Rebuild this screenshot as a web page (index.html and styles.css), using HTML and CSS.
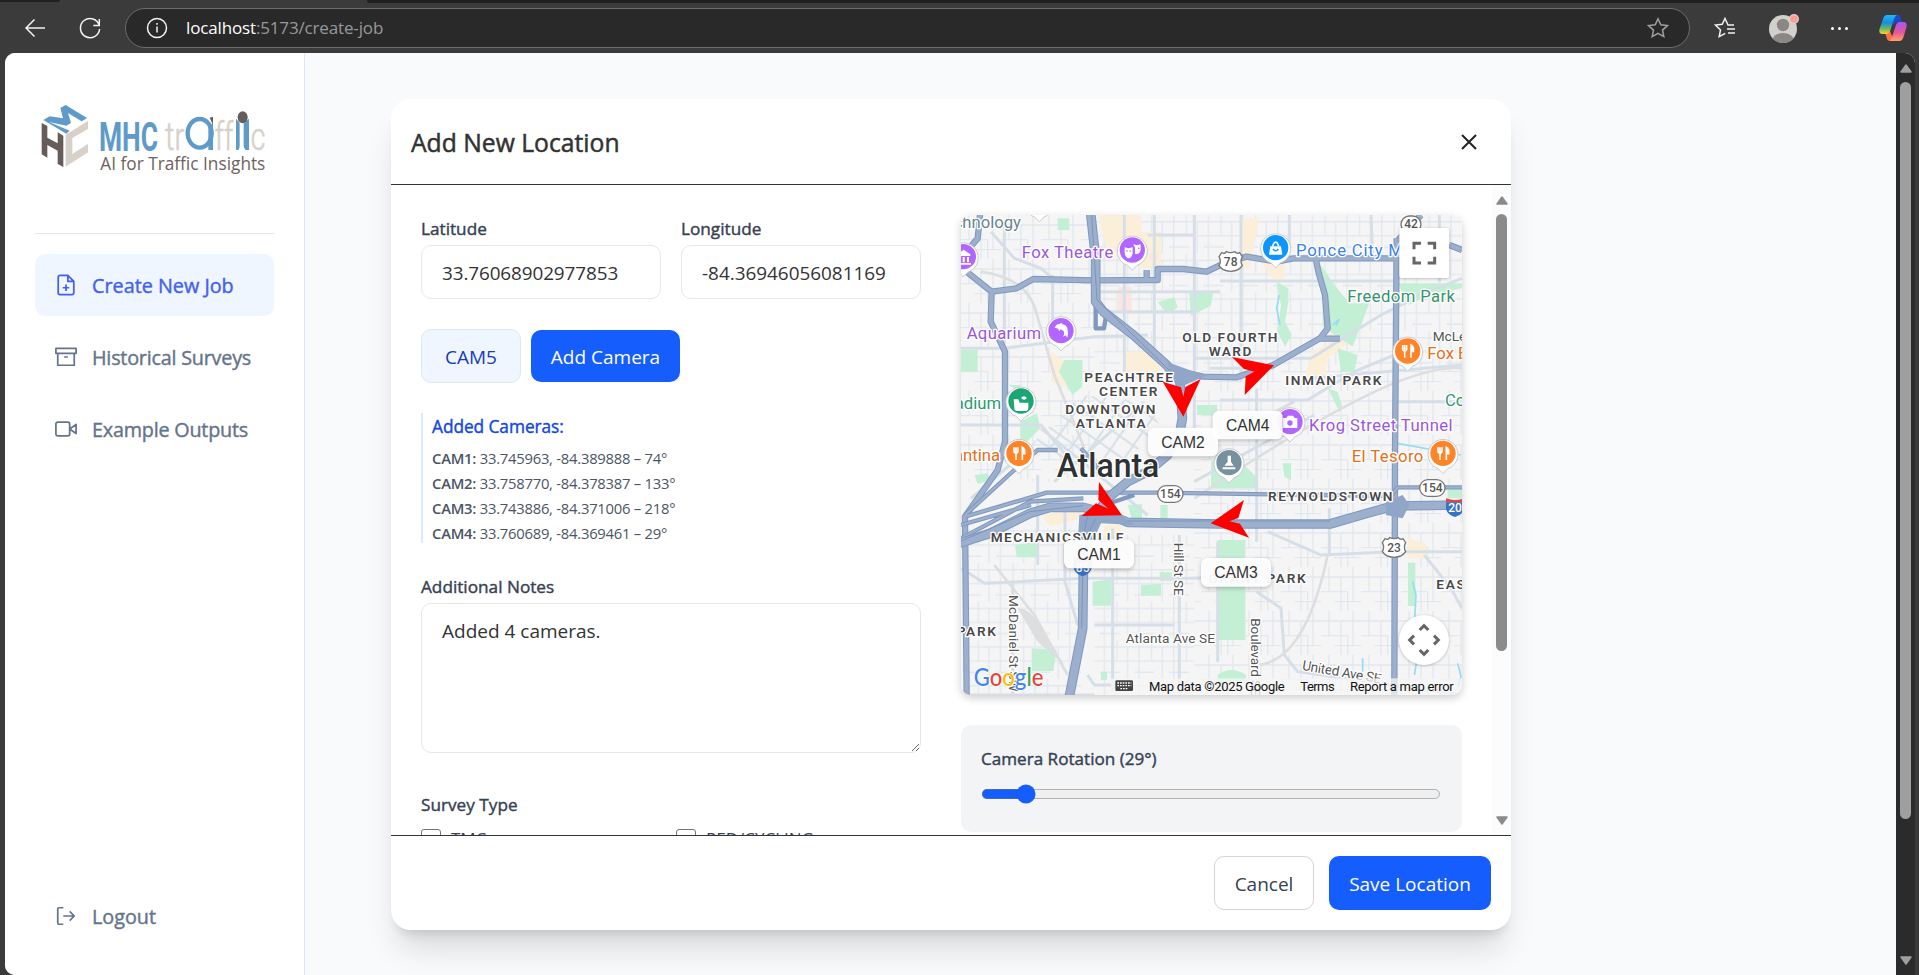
FILE: index.html
```html
<!DOCTYPE html>
<html lang="en">
<head>
<meta charset="utf-8">
<title>Create New Job</title>
<link rel="stylesheet" href="styles.css">
</head>
<body>
<div class="browser">
  <div class="tabstrip"><span class="tab-left"></span><span class="tab-right"></span></div>
  <div class="toolbar">
    <span class="tool back"><svg width="24" height="24" viewBox="0 0 24 24"><path d="M22 12H3M11.500 3.500L3 12l8.500 8.500"/></svg></span>
    <span class="tool reload"><svg width="24" height="24" viewBox="0 0 24 24"><path d="M21.300 9.500A9.600 9.600 0 1 0 21.600 13M21.300 3v6.500h-6"/></svg></span>
    <div class="address">
      <svg width="22" height="22" viewBox="0 0 22 22"><circle cx="11" cy="11" r="9.500"/><path d="M11 9.500v6M11 6v1.700"/></svg>
      <span class="url"><b>localhost</b>:5173/create-job</span>
      <svg class="star" width="22" height="22" viewBox="0 0 22 22"><path d="M11 1.800l2.800 6 6.600.8-4.900 4.500 1.300 6.500-5.800-3.200-5.800 3.200 1.300-6.500L1.600 8.600l6.600-.8z"/></svg>
    </div>
    <span class="tool favs"><svg width="24" height="24" viewBox="0 0 24 24"><path d="M21 9h-6l-3-6.500-2.800 5.800-6.700.8 5 4.800-1.300 6.700 6-3.300M14 13h8M15 17h7"/></svg></span>
    <span class="tool avatar"><svg width="32" height="32" viewBox="0 0 32 32"><defs><clipPath id="av"><circle cx="15" cy="17" r="14"/></clipPath></defs><circle cx="15" cy="17" r="14" fill="#d2d0cc"/><g clip-path="url(#av)" fill="#8b8884"><circle cx="15" cy="13" r="6.200"/><ellipse cx="15" cy="29" rx="11" ry="8"/></g><circle cx="26" cy="7" r="5" fill="#d9d2cd"/><circle cx="26" cy="7" r="3.800" fill="#ff9d93"/></svg></span>
    <span class="tool dots"><i></i><i></i><i></i></span>
    <span class="tool copilot"><svg width="28" height="28" viewBox="0 0 28 28"><defs><linearGradient id="ca" x1="0" y1="0" x2="0" y2="1"><stop offset="0" stop-color="#20b7f5"/><stop offset=".4" stop-color="#158ee0"/><stop offset=".7" stop-color="#62b66a"/><stop offset="1" stop-color="#ffd02f"/></linearGradient><linearGradient id="cb" x1="0" y1="0" x2="0" y2="1"><stop offset="0" stop-color="#a455ef"/><stop offset=".55" stop-color="#e85599"/><stop offset="1" stop-color="#ffa463"/></linearGradient></defs><path d="M15 1h4q2 0 2.600 2.200L23 8h-5l-5 3z" fill="#1948c8"/><path d="M6.500 20L11 17l4 10h-4q-2.500 0-3-2z" fill="#ff6f3c"/><path d="M8 1h10q-2 1-3 4l-4 12q-1 3-4 3H3.500Q-.5 20 .5 15L4 5q1.200-4 4-4z" fill="url(#ca)"/><path d="M20 8h4.500q4 0 3 5l-3 10q-1.200 4-4 4H10q2-1 3-4l4-12q1-3 3-3z" fill="url(#cb)"/></svg></span>
  </div>

  <div class="viewport">
    <aside class="sidebar">
      <svg class="logo" viewBox="100 300 720 240" role="img" aria-label="MHC traffic">
        <path fill="#5e9aca" d="M182 324L198 315 262 354 246 364 205 339 214 369 200 377 148 366 210 392 200 401 131 360 150 349 190 355z"/>
        <path fill="#665d5b" d="M126 369L143 378V413L174 430V397L191 407V501L174 492V452L143 435V473L126 463z"/>
        <path fill="#d7d1ca" d="M265 363V387L218 414V462L265 431V457L198 500V404z"/>
        <text x="298" y="452" class="lg-mhc" textLength="177" lengthAdjust="spacingAndGlyphs">MHC</text>
        <text x="496" y="450" class="lg-thin" textLength="58" lengthAdjust="spacingAndGlyphs">tr</text>
        <ellipse cx="600" cy="400" rx="36" ry="43" fill="none" stroke="#5e9aca" stroke-width="13"/>
        <path d="M626 372h14v78h-14z" fill="#5e9aca"/><path d="M630 353l10-3v25z" fill="#665d5b"/>
        <text x="645" y="450" class="lg-thin" textLength="56" lengthAdjust="spacingAndGlyphs">ff</text>
        <path d="M709 356l11 12v70q0 6-4 12h-7zM748 356l-16 14v68q2 8 5 12h11z" fill="#5e9aca"/><ellipse cx="729" cy="352" rx="15" ry="18" fill="#665d5b"/>
        <text x="753" y="450" class="lg-thin" textLength="44" lengthAdjust="spacingAndGlyphs">c</text>
        <text x="302" y="509" class="lg-tag" textLength="495" lengthAdjust="spacingAndGlyphs">AI for Traffic Insights</text>
      </svg>
      <nav class="nav">
        <a class="nav-item active"><svg viewBox="0 0 24 24"><path d="M14 1.500H5.500a2 2 0 0 0-2 2v17a2 2 0 0 0 2 2h13a2 2 0 0 0 2-2V8zM14 1.500v6.500h6.500M12 11.500v7M8.500 15h7"/></svg><span>Create New Job</span></a>
        <a class="nav-item"><svg viewBox="0 0 24 24"><path d="M1 2.500h22v5.500h-22zM3 8v13h18V8M10 12h4"/></svg><span class="tight">Historical Surveys</span></a>
        <a class="nav-item"><svg viewBox="0 0 24 24"><path d="M23 7l-7 5 7 5zM3 4.500h11a2 2 0 0 1 2 2v11a2 2 0 0 1-2 2H3a2 2 0 0 1-2-2V6.500a2 2 0 0 1 2-2z"/></svg><span class="tight">Example Outputs</span></a>
      </nav>
      <a class="nav-item logout"><svg viewBox="0 0 24 24"><path d="M9 3H4.500A1.500 1.500 0 0 0 3 4.500v15A1.500 1.500 0 0 0 4.500 21H9M16 7l5 5-5 5M21 12H9"/></svg><span>Logout</span></a>
    </aside>

    <main class="content">
      <section class="modal">
        <header class="modal-head"><h2>Add New Location</h2><svg width="16" height="16" viewBox="0 0 16 16"><path d="M1 1l14 14M15 1L1 15"/></svg></header>
        <div class="modal-body">
          <div class="form">
            <div class="coords">
              <label>Latitude<span class="input">33.76068902977853</span></label>
              <label>Longitude<span class="input">-84.36946056081169</span></label>
            </div>
            <div class="cam-row"><span class="cam-name">CAM5</span><button class="btn primary add">Add Camera</button></div>
            <div class="added">
              <h3>Added Cameras:</h3>
              <p><b>CAM1:</b> 33.745963, -84.389888 – 74°</p>
              <p><b>CAM2:</b> 33.758770, -84.378387 – 133°</p>
              <p><b>CAM3:</b> 33.743886, -84.371006 – 218°</p>
              <p><b>CAM4:</b> 33.760689, -84.369461 – 29°</p>
            </div>
            <label class="notes">Additional Notes</label>
            <textarea>Added 4 cameras.</textarea>
            <div class="survey">Survey Type</div>
            <div class="checks"><span><i></i>TMC</span><span><i></i>PED/CYCLING</span></div>
          </div>

          <div class="side">
            <div class="map">
<svg viewBox="0 0 1503 1440" width="501" height="480">
<defs>
<pattern id="g1" width="120" height="132" patternUnits="userSpaceOnUse"><path class="minor" d="M0 30H120M0 74H80M40 104H120M24 0V74M60 30V132M96 0V104M80 74V132"/></pattern>
<pattern id="g2" width="104" height="116" patternUnits="userSpaceOnUse"><path class="minor" d="M0 20H104M0 62H104M0 96H60M14 0V116M52 0V62M84 20V116"/></pattern>
<pattern id="g3" width="50" height="50" patternUnits="userSpaceOnUse" patternTransform="rotate(35)"><path class="minor mid" d="M0 20H50M20 0V50"/></pattern>
<g id="pin"><path d="M0 61L-14 46A45 45 0 1 1 14 46Z" fill="#fff" stroke="#c9ccd0" stroke-width="3"/><circle r="38"/></g>
<g id="fork" fill="none" stroke="#fff" stroke-width="5"><path d="M-15-18v11q0 6 6 6t6-6v-11M-9-18V20"/><path d="M10 20V-18q9 4 7 19h-7" fill="#fff"/></g>
</defs>
<rect width="1503" height="1440" fill="#f5f5f5"/>
<path fill="url(#g1)" d="M0 0H400V800H0zM700 430H1503V1440H700z"/>
<path fill="url(#g2)" d="M400 0H820V470H400zM10 940H360V1440H10zM400 960H700V1440H400zM820 0H1503V450H820z"/>
<path fill="#fbefd9" d="M410 0h130v80l-40 50-60-20zM540 50h60v110h-60zM835 10h60l-30 150h-30zM900 140h70v50l-30 10zM490 410h110v80h-110zM270 410l70 50-20 60-50-20zM1050 410l50-20 10-50 60-50 10 80-80 60-10 60-60 10zM930 590l60-30v60l-50 30zM240 900l120-20v30l-90 25zM430 930h50v110h-50zM1340 970l55 15v45h-55z"/>
<path fill="#fce4e2" d="M470 215h42v80h-42zM565 115h26v20h-26z"/>
<path fill="#c3f0d4" d="M290 10h35v35h-35zM685 232h72l-8 40-60 32zM590 262l50-15 10 30-30 20zM0 405h50v65H0zM310 435h54v80l-30 24-40-70zM142 510h36v190l60-60-10-45-50 25v-90zM708 570h60v30h-60zM947 200l35 20v40l-10 60 20 40-20 35-22-45 10-80zM1075 145l50 70 40 50 60 0-50 130-90-60v-80zM1310 205h193v15l-100 20-60 30zM1130 400l60 20-10 50-40 0zM1100 520l30 10 15 50-10 10-20-40zM395 1100l55-8v80h-55zM500 870l43-2v48l-30 0zM598 870h22v46h-22zM750 740l60-30 80 80v30H750zM770 975h83v300H770zM162 990l65-10v47h-60zM540 1110l60-4v36h-60zM596 1072h36v26h-36zM212 1300l75 4-10 64h-65zM770 1380q40-30 85 0v20h-85zM1341 1043h22v130h-22zM1460 820h43v30h-43zM965 745h25v50l-20-10zM40 780l40-5 10 20-40 12zM420 1370h18v25h-18z"/>
<path fill="url(#g3)" d="M360 540L560 560 600 640 440 790 210 690z"/>
<path class="mid" d="M0 400H130L400 365 560 360M275 180V360M130 410V20M490 0V470M580 0V400M700 0V640M400 230H777M400 290H700M560 60H700M0 630H240L340 750M240 640L560 900M540 570L280 800M840 0V500M777 198H1300M700 430H1050L1260 300 1400 230 1503 190M1050 490L1503 450M777 555H1040L1180 470 1300 420M887 520V980M747 460H940M90 50L160 130 240 160 275 190M1230 0L1235 130M985 0V100M1435 0V200M1105 880V1020M920 950L1080 1020 1300 1010H1503M1390 1020L1470 1120 1503 1180M887 1130L960 1180 970 1320 1010 1370 1503 1440M0 1060L70 1105 367 1090H770M455 940V1430M655 960V1440M155 1100V1440M230 780V1050M312 870V1100L350 1230M770 980V1340M0 1440H400M380 1380L400 1410H500M400 1230H640M1503 560L1300 560M850 640L1000 560M700 800L1060 600M30 850L170 730"/>
<path d="M60 170Q200 190 225 290L280 480 370 700M100 1050L220 1200 320 1380M700 850Q1000 650 1200 550T1503 460M1100 1020Q1030 1350 880 1350" fill="none" stroke="#dcdee0" stroke-width="8"/>
<path d="M170 1180Q210 1180 240 1240L310 1350 230 1280z" fill="#dcdee0"/>
<path d="M955 240l-8 40 10 50M1115 330l20-18-10 20M1355 1100l10 40-5 90M1360 1240l10 80-10 60M1205 1330v40M1490 1345l10 40-10 30M1310 685l190 35" fill="none" stroke="#93ddf2" stroke-width="5"/>
<g class="hwy-case"><path id="roads" d="M57 0L50 70 20 105M17 170L92 230 167 220 217 192 397 196 590 195 590 162 667 162 737 170 800 140 857 125 947 140 997 130H1307M557 195V165M92 230L89 320 132 410V680L110 765 12 905 17 1440M657 470L727 485 827 487 937 450 1077 370 1100 340 1092 240 1072 170 1065 135M1077 370L1137 371M1307 70L1302 720 1300 1440M1380 0L1307 80M1465 90L1503 105"/></g>
<g class="hwy"><use href="#roads"/></g>
<path class="thin-case" d="M12 905L257 833H587L1290 843 1310 817H1503M0 970L207 860 367 850M12 900L160 765 230 705 290 705M0 930L210 870M400 900L430 870 520 840M360 700L420 770M404 260v80h25l8-50"/>
<path class="thin" d="M12 905L257 833H587L1290 843 1310 817H1503M0 970L207 860 367 850M12 900L160 765 230 705 290 705M0 930L210 870M360 700L420 770"/>
<path class="big-case" d="M389 -5L404 130V260L427 290 517 360 617 450 657 500 664 610 657 650 620 720 560 770 500 800 440 850 390 920 367 960V1075L365 1240 325 1445M-5 985L87 955 207 895 267 877H367L437 895 500 922 777 927H1107L1217 895 1297 873 1508 870"/>
<path class="big" d="M389 -5L404 130V260L427 290 517 360 617 450 657 500 664 610 657 650 620 720 560 770 500 800 440 850 390 920 367 960V1075L365 1240 325 1445M-5 985L87 955 207 895 267 877H367L437 895 500 922 777 927H1107L1217 895 1297 873 1508 870"/>
<path d="M617 440L700 470 740 480 650 520zM355 900L450 880 520 930 420 925 390 990H350zM1275 860l50-20 20 30-20 40-50-10z" fill="#8fa6c8"/>
<path d="M392 0L408 255 640 480M365 1080L362 1240M0 978L207 890 367 872M370 950l10-50M385 950l20-40M500 918H1107" fill="none" stroke="#7b95bd" stroke-width="3"/>

<g class="area">
<text x="370" y="500" textLength="266">PEACHTREE</text><text x="414" y="542" textLength="175">CENTER</text>
<text x="313" y="598" textLength="270">DOWNTOWN</text><text x="344" y="639" textLength="210">ATLANTA</text>
<text x="664" y="382" textLength="285">OLD FOURTH</text><text x="743" y="424" textLength="128">WARD</text>
<text x="973" y="511" textLength="288">INMAN PARK</text><text x="89" y="980" textLength="398">MECHANICSVILLE</text>
<text x="921" y="858" textLength="373">REYNOLDSTOWN</text><text x="742" y="1105" textLength="292">GRANT PARK</text>
<text x="1426" y="1121" textLength="116">EAST</text><text x="-13" y="1262" textLength="118">PARK</text>
</g>
<g class="poi">
<text x="180" y="40" text-anchor="end" fill="#6a8390">chnology</text>
<text x="182" y="130" textLength="275" fill="#9a55e0">Fox Theatre</text><text x="17" y="373" textLength="223" fill="#9a55e0">Aquarium</text>
<text x="120" y="582" text-anchor="end" fill="#2c9a70">Stadium</text><text x="117" y="738" text-anchor="end" fill="#e07020">Cantina</text>
<text x="1005" y="123" fill="#3f80ea" textLength="445">Ponce City Market</text><text x="1159" y="260" textLength="323" fill="#35946d">Freedom Park</text>
<text x="1415" y="378" fill="#444" class="sm">McLendon</text><text x="1399" y="433" fill="#e07020">Fox Bros</text>
<text x="1452" y="574" fill="#2c9a70">Co</text><text x="1044" y="647" textLength="431" fill="#9a55e0">Krog Street Tunnel</text>
<text x="1172" y="740" textLength="215" fill="#e07020">El Tesoro</text>
<text class="sm" x="494" y="1285" textLength="268">Atlanta Ave SE</text>
<text class="sm" transform="translate(143 1140) rotate(90)" textLength="290">McDaniel St SW</text>
<text class="sm" transform="translate(640 983) rotate(90)" textLength="159">Hill St SE</text>
<text class="sm" transform="translate(870 1210) rotate(90)" textLength="232">Boulevard SE</text>
<text class="sm" transform="translate(1022 1364) rotate(10)" textLength="240">United Ave SE</text>
</g>
<text class="city" x="287" y="785" textLength="308" lengthAdjust="spacingAndGlyphs">Atlanta</text>

<g class="shield"><path d="M782 113q10 5 14-3 13 6 26 0 6 8 14 3l8 12q-8 15 0 26-8 16-35 18-27-2-35-18 8-11 0-26z"/><path d="M1272 971q10 5 14-3 13 6 26 0 6 8 14 3l8 12q-8 15 0 26-8 16-35 18-27-2-35-18 8-11 0-26z"/><rect x="1320" y="3" width="60" height="50" rx="25"/><rect x="590" y="812" width="76" height="50" rx="25"/><rect x="1376" y="794" width="76" height="50" rx="25"/></g>
<g class="num"><text x="809" y="152">78</text><text x="1299" y="1010">23</text><text x="1350" y="40">42</text><text x="628" y="849">154</text><text x="1414" y="831">154</text></g>
<path d="M1455 862h54v20q-5 18-27 24-22-6-27-24zM338 1040h54v20q-5 18-27 24-22-6-27-24z" fill="#3872c4"/><path d="M1455 850q27 10 54 0v12h-54zM338 1028h54v12h-54z" fill="#d8474c"/>
<g class="num wh"><text x="1482" y="892">20</text><text x="365" y="1070">85</text></g>

<use href="#pin" x="235" y="-40" fill="#9aa6ad"/>
<use href="#pin" x="514" y="105" fill="#b266ff"/><use href="#pin" x="7" y="125" fill="#b266ff"/><use href="#pin" x="300" y="347" fill="#b266ff"/><use href="#pin" x="987" y="620" fill="#b266ff"/>
<use href="#pin" x="180" y="558" fill="#1ba673"/><use href="#pin" x="944" y="98" fill="#0a95ff"/><use href="#pin" x="804" y="743" fill="#78919f"/>
<use href="#pin" x="174" y="715" fill="#ff8327"/><use href="#pin" x="1340" y="408" fill="#ff8327"/><use href="#pin" x="1446" y="715" fill="#ff8327"/>
<use href="#fork" x="174" y="715"/><use href="#fork" x="1340" y="408"/><use href="#fork" x="1446" y="715"/>
<g fill="#fff"><path d="M491 97q12 5 24 0v18q-3 14-12 15-9-1-12-15zM517 88q11 5 22 0v17q-3 13-14 12l-3-1V98z"/><path d="M-10 118L8 104l20 14v5h-38zM-8 126h6v16h-6zM5 126h6v16H5zM18 126h6v16h-6zM-12 144h42v5h-42z"/><path d="M281 338q4-10 14-11l8-4 1 5q12 2 15 12 4 12 0 28l-5-7-8 4q6-9 2-17l-9-5-5 6-2-8z"/><path d="M158 553h14l4 10h26v16q0 9-9 9h-25q-8 0-8-9zM180 549q9-10 18 0-9 10-18 0z"/><path d="M928 94h32l4 25h-40z"/><path d="M966 609h10l5-7h15l5 7h8v30h-43z"/><path d="M800 722h10v18l8 12h-28l10-12zM785 757h38v6h-38z"/></g>
<path d="M936 94v-4q8-18 16 0v4" fill="none" stroke="#fff" stroke-width="5"/><path d="M936 102q8 11 16 0" fill="none" stroke="#0a95ff" stroke-width="4"/><circle cx="987" cy="624" r="8" fill="#b266ff"/><g fill="#b266ff"><circle cx="498" cy="108" r="2.500"/><circle cx="508" cy="108" r="2.500"/><circle cx="533" cy="100" r="2.500"/></g>

<path fill="#f00" d="M605 500L667 605 719 492 673 516 667 545 660 517zM813 426L939 451 851 540 854 484 880 470 848 461zM414 801L483 901 362 903 405 865 442 881 412 855zM849 855L749 925 864 968 837 926 805 919 832 909z"/>
<g class="tag"><rect x="561" y="638" width="210" height="86" rx="20"/><rect x="755" y="587" width="210" height="86" rx="20"/><rect x="309" y="974" width="210" height="86" rx="20"/><rect x="720" y="1029" width="210" height="86" rx="20"/></g>
<g class="tagtext"><text x="666" y="698">CAM2</text><text x="860" y="647">CAM4</text><text x="414" y="1034">CAM1</text><text x="825" y="1089">CAM3</text></g>

<g class="ctl"><rect x="1315" y="39" width="149" height="150" rx="6"/><circle cx="1389" cy="1275" r="75"/></g>
<g fill="none" stroke="#666" stroke-width="9"><path d="M1359 103V85h21M1400 85h21v18M1421 125v19h-21M1380 144h-21v-19"/><path d="M1376 1245l13-13 13 13M1376 1305l13 13 13-13M1359 1262l-13 13 13 13M1419 1262l13 13-13 13"/></g>
<rect x="450" y="1390" width="1053" height="50" fill="#f5f5f5" opacity=".75"/>
<text class="google" x="38" y="1413" textLength="209" lengthAdjust="spacingAndGlyphs"><tspan fill="#4285f4">G</tspan><tspan fill="#ea4335">o</tspan><tspan fill="#fbbc04">o</tspan><tspan fill="#4285f4">g</tspan><tspan fill="#34a853">l</tspan><tspan fill="#ea4335">e</tspan></text>
<rect x="463" y="1396" width="53" height="32" rx="4" fill="#444"/><path d="M469 1404h42M469 1412h42M478 1421h24" stroke="#fff" stroke-width="4" stroke-dasharray="5 3"/>
<g class="credit"><text x="564" y="1427" textLength="407">Map data ©2025 Google</text><text x="1018" y="1427" textLength="103">Terms</text><text x="1167" y="1427" textLength="311">Report a map error</text></g>
</svg>
            </div>
            <div class="rotation"><div>Camera Rotation (29°)</div><input type="range" min="0" max="360" value="29"></div>
          </div>
          <div class="scroll inner"><svg width="12" height="9" viewBox="0 0 12 9"><path d="M6 1l5 7H1z"/></svg><i></i><svg width="12" height="9" viewBox="0 0 12 9"><path d="M6 8l5-7H1z"/></svg></div>
        </div>
        <footer class="modal-foot"><button class="btn cancel">Cancel</button><button class="btn primary save">Save Location</button></footer>
      </section>
    </main>
    <div class="scroll outer"><svg width="12" height="9" viewBox="0 0 12 9"><path d="M6 1l5 7H1z"/></svg><i></i><svg width="12" height="9" viewBox="0 0 12 9"><path d="M6 8l5-7H1z"/></svg></div>
  </div>
</div>
</body>
</html>
```
FILE: styles.css
```css
* { box-sizing: border-box; }
body { margin: 0; overflow: hidden; font-family: "Open Sans", "Noto Sans", sans-serif; font-size: 19px; color: #333; }
h2, h3, p { margin: 0; }
.browser { height: 975px; display: flex; flex-direction: column; background: #3b3b3b; }
.tabstrip { height: 3px; display: flex; justify-content: space-between; }
.tab-left { width: 60px; height: 2px; background: #202020; border-radius: 0 0 4px 0; }
.tab-right { width: 1552px; height: 3px; background: #202020; border-radius: 0 0 0 4px; }
.toolbar { height: 50px; display: flex; align-items: center; flex: none; }
.toolbar svg { fill: none; stroke: #f2f2f2; stroke-width: 1.500; display: block; }
.toolbar .avatar svg, .toolbar .copilot svg { stroke: none; }
.back { margin-left: 23px; }
.reload { margin-left: 31px; }
.address { width: 1565px; height: 40px; margin-left: 23px; padding: 0 20px; border: 1px solid #6c6c6c; border-radius: 20px; background: #292929; display: flex; align-items: center; }
.url { margin-left: 18px; margin-top: -2px; font-size: 17px; color: #999; letter-spacing: -.15px; }
.url b { color: #fff; font-weight: 400; }
.address .star { margin-left: auto; stroke: #a0a0a0; }
.favs { margin-left: 23px; }
.avatar { margin-left: 31px; }
.dots { margin-left: 31px; display: flex; gap: 4px; }
.dots i { width: 3px; height: 3px; border-radius: 2px; background: #fff; }
.copilot { margin-left: 31px; }
.viewport { flex: 1; margin-left: 5px; margin-right: 4px; display: flex; border-radius: 10px 10px 0 10px; overflow: hidden; background: #f8fafc; }
.sidebar { width: 300px; border-right: 1px solid #dbe6f5; background: #fff; padding: 47px 30px 28px 30px; display: flex; flex-direction: column; }
.logo { width: 240px; height: 80px; display: block; margin-left: -2px; }
.lg-mhc { font: 700 124px "Roboto", sans-serif; fill: #5e9aca; }
.lg-thin { font: 300 118px "Roboto", sans-serif; fill: #d7d1ca; stroke: #d7d1ca; stroke-width: 2; }
.lg-tag { font: 400 57px "Open Sans", sans-serif; fill: #6d6260; }
.nav { margin-top: 53px; border-top: 1px solid #e2e6ee; padding-top: 20px; display: flex; flex-direction: column; gap: 10px; }
.nav-item { height: 62px; border-radius: 10px; padding: 0 20px; display: flex; align-items: center; gap: 15px; color: #64748b; font-size: 19.800px; white-space: nowrap; -webkit-text-stroke: .4px currentColor; }
.nav-item .tight { letter-spacing: -.22px; }
.nav-item svg { width: 22px; height: 22px; flex: none; fill: none; stroke: currentColor; stroke-width: 1.900; stroke-linejoin: round; }
.nav-item.active { background: #eff6ff; color: #4361ee; }
.logout { margin-top: auto; }
.content { flex: 1; padding: 46px 0 0 86px; }
.modal { width: 1120px; height: 831px; border-radius: 20px; background: #fff; box-shadow: 0 25px 31px -6px rgba(0,0,0,.12), 0 10px 12px -7px rgba(0,0,0,.14); display: flex; flex-direction: column; }
.modal-head { height: 86px; border-bottom: 1px solid #333; padding: 0 34px 0 20px; display: flex; align-items: center; justify-content: space-between; }
.modal-head h2 { font-size: 24.700px; font-weight: 400; padding-top: 2px; -webkit-text-stroke: .5px currentColor; }
.modal-head svg { stroke: #222; stroke-width: 2; }
.modal-body { height: 650px; display: flex; overflow: hidden; padding-left: 30px; }
.form { width: 500px; padding-top: 30px; margin-right: 40px; }
.coords { display: flex; gap: 20px; font-size: 17.200px; color: #364153; -webkit-text-stroke: .4px currentColor; }
.coords label { width: 240px; line-height: 28px; display: flex; flex-direction: column; gap: 2px; }
.input { height: 54px; border: 1px solid #e5e7eb; border-radius: 10px; padding: 0 20px; line-height: 55px; font-size: 18.900px; letter-spacing: -.1px; color: #333; -webkit-text-stroke: 0; }
.coords label:last-child .input { letter-spacing: 0; }
.cam-row { display: flex; align-items: center; gap: 10px; margin-top: 30px; height: 54px; }
.cam-name { width: 100px; height: 54px; line-height: 55px; text-align: center; border: 1px solid #e0e7f0; border-radius: 10px; background: #eff6ff; color: #193cb8; }
.btn { font: 400 19px "Open Sans", "Noto Sans", sans-serif; border: 0; border-radius: 10px; padding: 1px 0 0; }
.primary { background: #155dfc; color: #fff; }
.add { width: 149px; height: 52px; }
.added { height: 130px; margin-top: 30px; border-left: 2px solid #dbeafe; padding-left: 9px; font-size: 14.800px; color: #4a5565; line-height: 25px; letter-spacing: -.24px; }
.added h3 { font-size: 17.300px; line-height: 28px; font-weight: 400; color: #1447e6; margin-bottom: 5px; letter-spacing: -.05px; -webkit-text-stroke: .4px currentColor; }
.added b { font-weight: 600; }
.notes, .survey { display: block; height: 26px; line-height: 26px; margin-top: 31px; font-size: 17.200px; color: #364153; -webkit-text-stroke: .4px currentColor; }
textarea { zoom: 1.25; display: block; width: 400px; height: 120px; margin: 2.400px 0 0; border: 1px solid #e5e7eb; border-radius: 8px; padding: 11px 15px 5px 16px; font: 400 15.200px/22px "Open Sans", "Noto Sans", sans-serif; color: #333; outline: 0; }
.survey { margin-top: 39px; }
.checks { display: flex; margin-top: 11px; font-size: 17px; color: #364153; }
.checks span { width: 255px; flex: none; display: flex; gap: 10px; align-items: flex-start; line-height: 19px; }
.checks i { width: 20px; height: 20px; border: 1px solid #767676; border-radius: 3px; }
.side { width: 501px; padding-top: 30px; }
.map { height: 480px; border-radius: 10px; overflow: hidden; box-shadow: 0 3px 8px rgba(0,0,0,.2); }
.map svg { display: block; }
.map text { font-family: "Roboto", sans-serif; }
.minor, .mid { fill: none; stroke: #e2e8ee; stroke-width: 4; }
.mid { stroke: #d6dfe7; stroke-width: 9; }
.minor.mid { stroke-width: 6; }
.hwy, .hwy-case, .thin, .thin-case, .big, .big-case { fill: none; stroke-linejoin: round; }
.hwy-case { stroke: #7f98be; stroke-width: 19; }
.hwy { stroke: #9cafcd; stroke-width: 13; }
.thin-case { stroke: #7f98be; stroke-width: 13; }
.thin { stroke: #9cafcd; stroke-width: 7; }
.big-case { stroke: #7f98be; stroke-width: 29; }
.big { stroke: #9cafcd; stroke-width: 23; }
.area text, .poi text, .city { paint-order: stroke; stroke: #fff; stroke-width: 8; stroke-linejoin: round; }
.area text { font-size: 41px; font-weight: 600; fill: #48484a; }
.poi text { font-size: 50px; font-weight: 400; }
.poi .sm { font-size: 41px; fill: #555; }
.city { font-size: 100px; font-weight: 500; fill: #303133; }
.shield { fill: #fff; stroke: #777; stroke-width: 4; }
.num text { font-size: 36px; font-weight: 500; fill: #555; text-anchor: middle; }
.num.wh text { fill: #fff; }
.tag { fill: #fff; fill-opacity: .94; filter: drop-shadow(0 5px 6px rgba(0,0,0,.25)); }
.map .tagtext text { font: 47px "Liberation Sans", Arial, sans-serif; fill: #333; text-anchor: middle; }
.ctl { fill: #fff; filter: drop-shadow(0 2px 5px rgba(0,0,0,.25)); }
.map .google { font: 500 76px "Lato", sans-serif; paint-order: stroke; stroke: #fff; stroke-width: 5; }
.credit text { font-size: 39px; fill: #111; }
.rotation { height: 107px; margin-top: 30px; border-radius: 10px; background: #f3f4f6; padding: 21px 20px 0; font-size: 17.100px; line-height: 26px; color: #364153; -webkit-text-stroke: .4px currentColor; }
.rotation input { zoom: 1.25; display: block; width: 368px; height: 16px; margin: 9.600px 0 0; accent-color: #155dfc; }
.scroll { display: flex; flex-direction: column; align-items: center; }
.scroll i { width: 11px; border-radius: 6px; }
.scroll svg { display: block; stroke-width: 1.500; stroke-linejoin: round; }
.inner { width: 19px; margin-left: auto; background: #fcfcfc; padding: 11px 0 10px; }
.inner i { background: #8b8b8b; height: 437px; margin-top: 9px; }
.inner svg { fill: #8b8b8b; stroke: #8b8b8b; }
.inner svg:last-child, .outer svg:last-child { margin-top: auto; }
.modal-foot { flex: 1; border-top: 1px solid #333; border-radius: 0 0 20px 20px; padding: 20px 20px 0; display: flex; justify-content: flex-end; gap: 15px; }
.cancel { width: 100px; height: 54px; background: #fff; border: 1px solid #d1d5dc; color: #364153; }
.save { width: 162px; height: 54px; }
.outer { width: 19px; background: #2b2b2b; padding: 11px 0 10px; }
.outer i { background: #9f9f9f; height: 737px; margin-top: 9px; }
.outer svg { fill: #9f9f9f; stroke: #9f9f9f; }
```
